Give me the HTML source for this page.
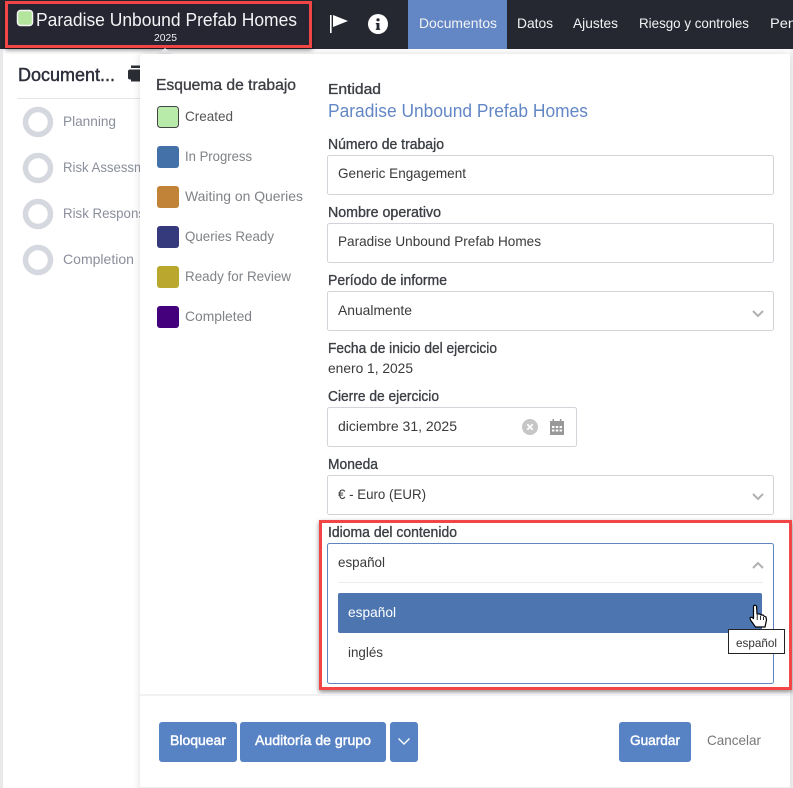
<!DOCTYPE html>
<html lang="es"><head><meta charset="utf-8"><title>Paradise Unbound Prefab Homes</title>
<style>
html,body{margin:0;padding:0;background:#fff;width:793px;height:788px;overflow:hidden}
svg{display:block}
text{font-family:"Liberation Sans",sans-serif;font-size:14px}
.l{fill:#3c3f44;font-size:14.5px;stroke:#3c3f44;stroke-width:.35px}
.v{fill:#3a3a3a;font-size:14px}
.n{fill:#f2f3f5;font-size:14px}
.s{fill:#8b8f9c;font-size:14px}
.w{fill:#7f8287;font-size:14px}
.b{fill:#fff;font-size:14px;stroke:#fff;stroke-width:.45px}
.f{fill:#fff;stroke:#d3d3d9;stroke-width:1}
.c{fill:none;stroke:#b0b0b0;stroke-width:2}
</style></head><body>
<svg width="793" height="788" viewBox="0 0 793 788" xmlns="http://www.w3.org/2000/svg">
<defs>
<filter id="sh" x="-10%" y="-10%" width="120%" height="120%"><feDropShadow dx="0" dy="0" stdDeviation="4" flood-color="#000" flood-opacity=".14"/></filter>
<filter id="rs" x="-5%" y="-20%" width="110%" height="140%"><feDropShadow dx="0" dy="2" stdDeviation="2.5" flood-color="#000" flood-opacity=".45"/></filter>
</defs>
<rect width="793" height="788" fill="#fff"/>
<rect x="0" y="49" width="3" height="739" fill="#e9e9ec"/>
<rect x="790" y="49" width="3" height="739" fill="#f5f5f7"/>

<!-- header -->
<rect width="793" height="49" fill="#252830"/>
<rect x="408" y="0" width="99" height="49" fill="#6387c5"/>
<text class="n" x="419" y="28" textLength="78" lengthAdjust="spacingAndGlyphs">Documentos</text>
<text class="n" x="517" y="28" textLength="36" lengthAdjust="spacingAndGlyphs">Datos</text>
<text class="n" x="573" y="28" textLength="45" lengthAdjust="spacingAndGlyphs">Ajustes</text>
<text class="n" x="639" y="28" textLength="110" lengthAdjust="spacingAndGlyphs">Riesgo y controles</text>
<text class="n" x="770" y="28" textLength="26" lengthAdjust="spacingAndGlyphs">Pen</text>
<rect x="330" y="15" width="1.6" height="18" fill="#fff"/>
<path d="M333 15 L348 21 L333 27 Z" fill="#fff"/>
<circle cx="378" cy="24" r="10" fill="#fff"/>
<rect x="376.6" y="23" width="2.8" height="6.5" fill="#252830"/>
<rect x="375.8" y="23" width="2.5" height="1.3" fill="#252830"/>
<rect x="375.8" y="28.6" width="4.400" height="1.3" fill="#252830"/>
<circle cx="378" cy="19.800" r="1.600" fill="#252830"/>

<!-- left red box -->
<g filter="url(#rs)"><rect x="6.5" y="2.5" width="304" height="44" fill="#252830" stroke="#f24545" stroke-width="3"/></g>
<rect x="17.5" y="10.5" width="15" height="15" rx="3" fill="#b4e59c" stroke="#f4f4f4" stroke-width="1.5"/>
<text x="36" y="26" fill="#f2f3f5" style="font-size:18px" textLength="261" lengthAdjust="spacingAndGlyphs">Paradise Unbound Prefab Homes</text>
<text x="154" y="41" fill="#eef0f4" style="font-size:10.5px" textLength="23" lengthAdjust="spacingAndGlyphs">2025</text>

<!-- background page -->
<text x="18" y="81" fill="#2c2f3a" stroke="#2c2f3a" stroke-width=".45" style="font-size:18px" textLength="97" lengthAdjust="spacingAndGlyphs">Document...</text>
<rect x="131" y="65.500" width="12" height="2.500" fill="#2b2d34"/>
<rect x="128" y="69.500" width="14" height="10" rx="2" fill="#2b2d34"/>
<rect x="131" y="76" width="12" height="5.500" fill="#2b2d34"/>
<rect x="17" y="98" width="123" height="1" fill="#e4e4e8"/>
<g fill="none" stroke="#d5d8de" stroke-width="5.5">
<circle cx="38" cy="122" r="12.5"/><circle cx="38" cy="168" r="12.5"/><circle cx="38" cy="214" r="12.5"/><circle cx="38" cy="260" r="12.5"/>
</g>
<text class="s" x="63" y="126" textLength="53" lengthAdjust="spacingAndGlyphs">Planning</text>
<text class="s" x="63" y="172" textLength="82" lengthAdjust="spacingAndGlyphs">Risk Assessm</text>
<text class="s" x="63" y="218" textLength="82" lengthAdjust="spacingAndGlyphs">Risk Respons</text>
<text class="s" x="63" y="264" textLength="71" lengthAdjust="spacingAndGlyphs">Completion</text>

<!-- panel -->
<path d="M158 54 L165 48 L172 54 Z" fill="#e9e9ec"/>
<rect x="140" y="54" width="650" height="740" rx="3" fill="#fff" filter="url(#sh)"/>

<text x="156" y="90" fill="#3d3f44" stroke="#3d3f44" stroke-width=".35" style="font-size:15.5px" textLength="140" lengthAdjust="spacingAndGlyphs">Esquema de trabajo</text>
<rect x="157.5" y="106.5" width="21" height="21" rx="3" fill="#b8ebaa" stroke="#444" stroke-width="1"/>
<rect x="157" y="146" width="22" height="22" rx="3" fill="#4472a8"/>
<rect x="157" y="186" width="22" height="22" rx="3" fill="#c08337"/>
<rect x="157" y="226" width="22" height="22" rx="3" fill="#343a7c"/>
<rect x="157" y="266" width="22" height="22" rx="3" fill="#b9a72e"/>
<rect x="157" y="306" width="22" height="22" rx="3" fill="#44007c"/>
<text x="185" y="121" fill="#555" textLength="48" lengthAdjust="spacingAndGlyphs">Created</text>
<text class="w" x="185" y="161" textLength="67" lengthAdjust="spacingAndGlyphs">In Progress</text>
<text class="w" x="185" y="201" textLength="118" lengthAdjust="spacingAndGlyphs">Waiting on Queries</text>
<text class="w" x="185" y="241" textLength="89" lengthAdjust="spacingAndGlyphs">Queries Ready</text>
<text class="w" x="185" y="281" textLength="106" lengthAdjust="spacingAndGlyphs">Ready for Review</text>
<text class="w" x="185" y="321" textLength="67" lengthAdjust="spacingAndGlyphs">Completed</text>

<text class="l" x="328" y="94" textLength="53" lengthAdjust="spacingAndGlyphs">Entidad</text>
<text x="328" y="117" fill="#6387c5" style="font-size:18px" textLength="260" lengthAdjust="spacingAndGlyphs">Paradise Unbound Prefab Homes</text>

<text class="l" x="328" y="149" textLength="116" lengthAdjust="spacingAndGlyphs">Número de trabajo</text>
<rect class="f" x="327.5" y="155.5" width="446" height="39" rx="2"/>
<text class="v" x="338" y="178" textLength="128" lengthAdjust="spacingAndGlyphs">Generic Engagement</text>

<text class="l" x="328" y="217" textLength="113" lengthAdjust="spacingAndGlyphs">Nombre operativo</text>
<rect class="f" x="327.5" y="223.5" width="446" height="39" rx="2"/>
<text class="v" x="338" y="246" textLength="203" lengthAdjust="spacingAndGlyphs">Paradise Unbound Prefab Homes</text>

<text class="l" x="328" y="285" textLength="119" lengthAdjust="spacingAndGlyphs">Período de informe</text>
<rect class="f" x="327.5" y="291.5" width="446" height="39" rx="2"/>
<text class="v" x="338" y="315" textLength="74" lengthAdjust="spacingAndGlyphs">Anualmente</text>
<path class="c" d="M753 311 L758 316 L763 311"/>

<text class="l" x="328" y="353" textLength="169" lengthAdjust="spacingAndGlyphs">Fecha de inicio del ejercicio</text>
<text class="v" x="328" y="373" textLength="85" lengthAdjust="spacingAndGlyphs">enero 1, 2025</text>

<text class="l" x="328" y="401" textLength="111" lengthAdjust="spacingAndGlyphs">Cierre de ejercicio</text>
<rect class="f" x="327.5" y="407.5" width="249" height="39" rx="2"/>
<text class="v" x="338" y="431" textLength="119" lengthAdjust="spacingAndGlyphs">diciembre 31, 2025</text>
<circle cx="530" cy="427" r="8" fill="#c6c6c6"/>
<path d="M527.3 424.3 L532.7 429.7 M532.700 424.3 L527.3 429.7" stroke="#fff" stroke-width="1.8" fill="none"/>
<path d="M550 421h14v14h-14z" fill="#999"/>
<rect x="552.5" y="419" width="1.6" height="3.5" fill="#999"/><rect x="559.9" y="419" width="1.6" height="3.5" fill="#999"/>
<g fill="#fff"><rect x="552" y="426" width="2.4" height="2"/><rect x="555.8" y="426" width="2.4" height="2"/><rect x="559.6" y="426" width="2.4" height="2"/><rect x="552" y="429.5" width="2.4" height="2"/><rect x="555.8" y="429.5" width="2.4" height="2"/><rect x="559.6" y="429.5" width="2.4" height="2"/></g>

<text class="l" x="328" y="469" textLength="50" lengthAdjust="spacingAndGlyphs">Moneda</text>
<rect class="f" x="327.5" y="475.5" width="446" height="39" rx="2"/>
<text class="v" x="338" y="499" textLength="88" lengthAdjust="spacingAndGlyphs">€ - Euro (EUR)</text>
<path class="c" d="M753 494 L758 499 L763 494"/>

<!-- language dropdown with red highlight -->
<rect x="320.5" y="521.5" width="470" height="167" fill="#fff" stroke="#f24545" stroke-width="3" filter="url(#rs)"/>
<rect x="322" y="523" width="467" height="164" fill="#fff"/>
<text class="l" x="328" y="537" textLength="129" lengthAdjust="spacingAndGlyphs">Idioma del contenido</text>
<rect x="327.5" y="543.5" width="446" height="140" rx="2" fill="#fff" stroke="#5f86c0" stroke-width="1"/>
<text class="v" x="338" y="567" textLength="47" lengthAdjust="spacingAndGlyphs">español</text>
<path class="c" d="M753 568 L758 563 L763 568"/>
<rect x="338" y="582" width="425" height="1" fill="#ececec"/>
<rect x="338" y="593" width="424" height="40" rx="2" fill="#4d76b0"/>
<text x="348" y="617" fill="#fff" textLength="48" lengthAdjust="spacingAndGlyphs">español</text>
<text class="v" x="348" y="657" textLength="35" lengthAdjust="spacingAndGlyphs">inglés</text>

<!-- hand cursor -->
<path d="M753.5 606 Q755 604.5 756.5 606 L757 614 L760 614 L761 615 L763 615 L764 616 L766 617 L766.5 620 L765 627 L755.500 627 L750.500 620 L750 618 Q751 616.500 753 618 L753.500 619 Z" fill="#fff" stroke="#000" stroke-width="1.2"/>
<path d="M757.200 615 V620 M760.500 616 V620 M763.500 617 V620" stroke="#000" stroke-width=".8" fill="none"/>

<!-- tooltip -->
<rect x="728.500" y="629.500" width="56" height="24" fill="#fff" stroke="#222" stroke-width="1"/>
<text x="736" y="647" fill="#333" style="font-size:12px" textLength="41" lengthAdjust="spacingAndGlyphs">español</text>

<!-- footer -->
<rect x="140" y="694" width="650" height="2" fill="#f1f1f3"/>
<rect x="159" y="722" width="78" height="40" rx="3" fill="#5783c5"/>
<rect x="240" y="722" width="146" height="40" rx="3" fill="#5783c5"/>
<rect x="390" y="722" width="28" height="40" rx="3" fill="#5783c5"/>
<rect x="619" y="722" width="72" height="40" rx="3" fill="#5783c5"/>
<text class="b" x="170" y="745" textLength="56" lengthAdjust="spacingAndGlyphs">Bloquear</text>
<text class="b" x="255" y="745" textLength="116" lengthAdjust="spacingAndGlyphs">Auditoría de grupo</text>
<path d="M398.500 738.500 L404 744 L409.500 738.500" fill="none" stroke="#fff" stroke-width="1.4"/>
<text class="b" x="630" y="745" textLength="50" lengthAdjust="spacingAndGlyphs">Guardar</text>
<text x="707" y="745" fill="#777" textLength="54" lengthAdjust="spacingAndGlyphs">Cancelar</text>
<rect x="140" y="787" width="650" height="1" fill="#f0f0f2"/>
</svg>
</body></html>
